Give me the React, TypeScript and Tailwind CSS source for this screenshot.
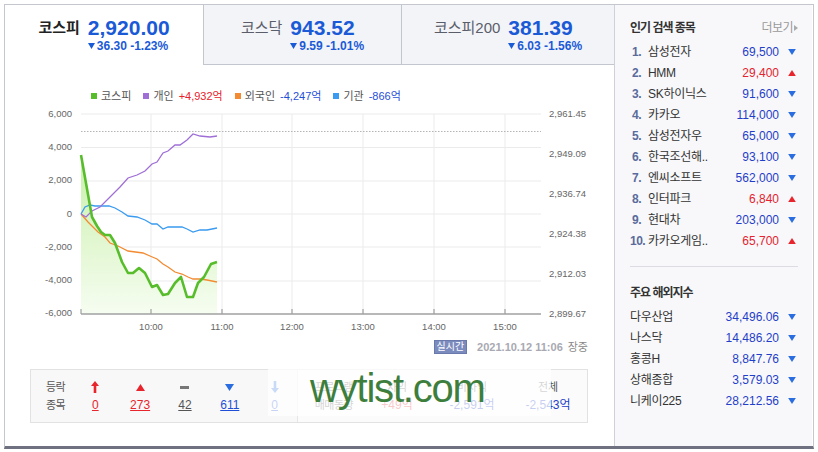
import React from 'react';

type Row = { rank?: number; name: string; price: string; up: boolean };

const popular: Row[] = [
  { rank: 1, name: '삼성전자', price: '69,500', up: false },
  { rank: 2, name: 'HMM', price: '29,400', up: true },
  { rank: 3, name: 'SK하이닉스', price: '91,600', up: false },
  { rank: 4, name: '카카오', price: '114,000', up: false },
  { rank: 5, name: '삼성전자우', price: '65,000', up: false },
  { rank: 6, name: '한국조선해..', price: '93,100', up: false },
  { rank: 7, name: '엔씨소프트', price: '562,000', up: false },
  { rank: 8, name: '인터파크', price: '6,840', up: true },
  { rank: 9, name: '현대차', price: '203,000', up: false },
  { rank: 10, name: '카카오게임..', price: '65,700', up: true },
];

const world: Row[] = [
  { name: '다우산업', price: '34,496.06', up: false },
  { name: '나스닥', price: '14,486.20', up: false },
  { name: '홍콩H', price: '8,847.76', up: false },
  { name: '상해종합', price: '3,579.03', up: false },
  { name: '니케이225', price: '28,212.56', up: false },
];

const Tri = ({ up, className = '' }: { up: boolean; className?: string }) => (
  <svg width="9" height="7" viewBox="0 0 9 7" className={className}>
    {up ? <polygon points="4.5,0 9,7 0,7" fill="#e8242c" /> : <polygon points="0,0 9,0 4.5,7" fill="#2a6de0" />}
  </svg>
);

const Tab = ({ label, value, change, active }: { label: string; value: string; change: string; active?: boolean }) => (
  <div
    className={
      active
        ? 'w-[198px] h-[60px] bg-white flex justify-center pt-[11px]'
        : 'h-[60px] bg-[#f3f4f7] border-l border-b border-[#c4c6ce] flex justify-center pt-[11px]'
    }
  >
    <span
      className={
        active
          ? 'text-[15px] leading-[24px] font-bold text-[#222] mr-[8px]'
          : 'text-[15px] leading-[24px] text-[#5a5e6a] mr-[8px]'
      }
    >
      {label}
    </span>
    <div>
      <div className="text-[21px] leading-[24px] font-bold text-[#1a5ad7]">{value}</div>
      <div className="flex items-center text-[12px] leading-[12px] font-bold text-[#1a5ad7]">
        <svg width="7" height="6" viewBox="0 0 7 6" className="mr-[2px]">
          <polygon points="0,0 7,0 3.5,6" fill="#1a5ad7" />
        </svg>
        {change}
      </div>
    </div>
  </div>
);

const green = '81,155 92,217 97,226 101,232 105,235 110,235 115,243 122,262 128,273 133,273 139,268 145,273 152,287 157,285 163,295 168,294 175,283 181,277 187,297 193,297 198,283 204,277 211,264 217,262';
const purple = '81,214 86,217 92,211 100,207 110,197 120,187 128,178 137,175 145,171 152,164 157,162 163,153 168,151 175,145 180,145 187,140 193,134 200,136 210,137 217,136';
const blue = '81,214 85,207 90,205 95,206 100,206 109,206 115,208 122,212 128,216 137,217 145,220 152,224 157,224 163,229 168,227 175,227 182,227 187,229 193,232 200,230 207,230 217,228';
const orange = '81,214 88,222 93,227 98,232 105,237 110,243 118,246 128,251 143,253 150,256 157,259 163,264 168,267 175,272 182,274 188,277 193,279 200,279 207,280 217,282';

const hLines = [114, 147.5, 181, 214, 247, 281];
const leftLabels = ['6,000', '4,000', '2,000', '0', '-2,000', '-4,000', '-6,000'];
const rightLabels = ['2,961.45', '2,949.09', '2,936.74', '2,924.38', '2,912.03', '2,899.67'];
const vLines = [151, 222, 292, 363, 434, 505];
const times = ['10:00', '11:00', '12:00', '13:00', '14:00', '15:00'];

const Chart = () => (
  <svg width="609" height="230" viewBox="5 105 609 230" className="block mt-[2px]">
    <defs>
      <linearGradient id="gfill" x1="0" y1="0" x2="0" y2="1">
        <stop offset="0" stopColor="#c9f0aa" />
        <stop offset="1" stopColor="#f6fdf1" />
      </linearGradient>
    </defs>
    {hLines.map((y) => (
      <line key={y} x1="81" x2="541" y1={y} y2={y} stroke="#ebebeb" strokeWidth="1" />
    ))}
    {vLines.map((x) => (
      <line key={x} x1={x} x2={x} y1="114" y2="314" stroke="#ebebeb" strokeWidth="1" />
    ))}
    <line x1="81" x2="541" y1="131.5" y2="131.5" stroke="#b4b4b4" strokeWidth="1" strokeDasharray="1.5,1.5" />
    <polygon points={`${green} 217,314 81,314`} fill="url(#gfill)" />
    <polyline points={orange} fill="none" stroke="#f28b32" strokeWidth="1.3" />
    <polyline points={blue} fill="none" stroke="#3a9bf0" strokeWidth="1.3" />
    <polyline points={purple} fill="none" stroke="#a06fd6" strokeWidth="1.3" />
    <polyline points={green} fill="none" stroke="#57bd2b" strokeWidth="2.6" strokeLinejoin="round" />
    <line x1="81" x2="541" y1="314" y2="314" stroke="#a0a0a0" strokeWidth="1.5" />
    {[81, ...vLines].map((x) => (
      <line key={x} x1={x} x2={x} y1="309" y2="314" stroke="#a0a0a0" strokeWidth="1.2" />
    ))}
    <g fontFamily="Liberation Sans, DejaVu Sans, sans-serif" fontSize="9.5" fill="#666">
      {leftLabels.map((t, i) => (
        <text key={t} x="72" y={114 + i * 33.33} textAnchor="end" dominantBaseline="middle">
          {t}
        </text>
      ))}
      {rightLabels.map((t, i) => (
        <text key={t} x="549" y={114 + i * 40} dominantBaseline="middle">
          {t}
        </text>
      ))}
      {times.map((t, i) => (
        <text key={t} x={vLines[i]} y="327" textAnchor="middle" dominantBaseline="middle">
          {t}
        </text>
      ))}
    </g>
  </svg>
);

const Legend = ({ color, label, value, valueColor }: { color: string; label: string; value?: string; valueColor?: string }) => (
  <div className="flex items-center mr-[12px]">
    <span className={`w-[6px] h-[6px] mr-[4px] ${color}`} />
    <span className="text-[#555]">{label}</span>
    {value && <span className={`ml-[5px] ${valueColor}`}>{value}</span>}
  </div>
);

const ListRow = ({ r }: { r: Row }) => (
  <div className="flex items-center h-[21px] text-[12px]">
    {r.rank !== undefined && (
      <span className={`w-[18px] font-bold text-[#5a6b9c] tracking-[-0.5px] ${r.rank < 10 ? 'pl-[2px]' : ''}`}>
        {r.rank}.
      </span>
    )}
    <span className="flex-1 text-[#333] tracking-[-0.3px] whitespace-nowrap">{r.name}</span>
    <span className={r.up ? 'text-[#e3232f]' : 'text-[#1f3ec9]'}>{r.price}</span>
    <span className="w-[19px] flex justify-end pr-[2px]">
      <Tri up={r.up} className="w-[8px] h-[6px]" />
    </span>
  </div>
);

const Cell = ({ children }: { children: React.ReactNode }) => (
  <div className="w-[45px] flex flex-col items-center">{children}</div>
);

export default function App() {
  return (
    <div className="w-[818px] h-[452px] bg-white pt-[4px] pl-[4px] font-['Liberation_Sans','Noto_Sans_CJK_KR',sans-serif]">
      <div className="w-[810px] h-[445px] border border-[#c5c7cf] border-b-[3px] border-b-[#6f7180] flex">
        {/* left: indices + chart */}
        <div className="w-[609px] flex flex-col">
          <div className="flex">
            <Tab label="코스피" value="2,920.00" change="36.30 -1.23%" active />
            <div className="w-[198px]">
              <Tab label="코스닥" value="943.52" change="9.59 -1.01%" />
            </div>
            <div className="w-[213px]">
              <Tab label="코스피200" value="381.39" change="6.03 -1.56%" />
            </div>
          </div>

          <div className="flex items-center mt-[24px] pl-[86px] h-[14px] text-[11px] leading-[14px]">
            <Legend color="bg-[#57bd2b]" label="코스피" />
            <Legend color="bg-[#a06fd6]" label="개인" value="+4,932억" valueColor="text-[#e8202a]" />
            <Legend color="bg-[#f28b32]" label="외국인" value="-4,247억" valueColor="text-[#1f4fd8]" />
            <Legend color="bg-[#3a9bf0]" label="기관" value="-866억" valueColor="text-[#1f4fd8]" />
          </div>

          <Chart />

          <div className="flex items-center justify-end pr-[26px] mt-[5px] h-[14px]">
            <span className="bg-[#7b8bbe] border border-[#6a79ac] text-white text-[10px] leading-[12px] px-[2px]">실시간</span>
            <span className="ml-[10px] text-[11px] font-bold text-[#a8a9b2]">2021.10.12 11:06</span>
            <span className="ml-[5px] text-[11px] text-[#888]">장중</span>
          </div>

          <div className="relative ml-[25px] mt-[15px] w-[558px] h-[54px] border border-[#e2e2e2] bg-[#f8f8f8] flex">
            <div className="flex pl-[15px] pt-[8px] w-[267px] border-r border-[#e6e6e6]">
              <div className="w-[27px] text-[11px] leading-[18px] text-[#555] tracking-[-0.5px]">
                <div>등락</div>
                <div>종목</div>
              </div>
              <Cell>
                <div className="h-[18px] flex items-center">
                  <svg width="8" height="12" viewBox="0 0 8 12">
                    <polygon points="4,0 8,5 5.3,5 5.3,12 2.7,12 2.7,5 0,5" fill="#e8242c" />
                  </svg>
                </div>
                <span className="text-[12px] leading-[18px] text-[#e8242c] underline">0</span>
              </Cell>
              <Cell>
                <div className="h-[18px] flex items-center">
                  <Tri up />
                </div>
                <span className="text-[12px] leading-[18px] text-[#e8242c] underline">273</span>
              </Cell>
              <Cell>
                <div className="h-[18px] flex items-center">
                  <span className="w-[9px] h-[3px] bg-[#777]" />
                </div>
                <span className="text-[12px] leading-[18px] text-[#555] underline">42</span>
              </Cell>
              <Cell>
                <div className="h-[18px] flex items-center">
                  <Tri up={false} />
                </div>
                <span className="text-[12px] leading-[18px] text-[#1f4fd8] underline">611</span>
              </Cell>
              <Cell>
                <div className="h-[18px] flex items-center">
                  <svg width="8" height="12" viewBox="0 0 8 12">
                    <polygon points="2.7,0 5.3,0 5.3,7 8,7 4,12 0,7 2.7,7" fill="#2a6de0" />
                  </svg>
                </div>
                <span className="text-[12px] leading-[18px] text-[#1f4fd8] underline">0</span>
              </Cell>
            </div>
            <div className="flex pt-[8px] text-[12px] leading-[18px] bg-[#fbfbfb] flex-1">
              <div className="w-[72px] flex flex-col items-center text-[11px] text-[#555] tracking-[-0.5px]">
                <div>프로그램</div>
                <div>매매동향</div>
              </div>
              <div className="w-[54px] flex flex-col items-center">
                <div className="text-[11px] text-[#555]">차익</div>
                <div className="text-[#e8242c]">+49억</div>
              </div>
              <div className="w-[96px] flex flex-col items-center">
                <div className="text-[11px] text-[#555]">비차익</div>
                <div className="text-[#1f3ec9]">-2,591억</div>
              </div>
              <div className="w-[56px] flex flex-col items-center">
                <div className="text-[11px] text-[#555]">전체</div>
                <div className="text-[#1f3ec9]">-2,543억</div>
              </div>
            </div>

            {/* watermark */}
            <div className="absolute left-[237px] top-[-1px] w-[283px] h-[47px] bg-white/75" />
            <div className="absolute left-[279px] top-[-2px] text-[40px] leading-[40px] tracking-[-1.2px] text-[#3d7e3d]">
              wytist.com
            </div>
          </div>
        </div>

        {/* right panel */}
        <div className="w-[198px] border-l border-[#cfd1d8] bg-[#f8f8fa] pl-[15px] pr-[14px] pt-[15px]">
          <div className="flex items-center justify-between h-[16px]">
            <span className="text-[12px] font-bold text-[#333] tracking-[-1px]">인기 검색 종목</span>
            <span className="flex items-center text-[12px] text-[#9a9a9a] tracking-[-0.5px]">
              더보기
              <svg width="4" height="6" viewBox="0 0 4 6" className="ml-[1px]">
                <polygon points="0,0 4,3 0,6" fill="#aaa" />
              </svg>
            </span>
          </div>
          <div className="mt-[5px]">
            {popular.map((r) => (
              <ListRow key={r.name} r={r} />
            ))}
          </div>
          <div className="mt-[15px] h-px bg-[#dcdde2]" />
          <div className="mt-[18px] h-[16px] flex items-center text-[12px] font-bold text-[#333] tracking-[-1px]">
            주요 해외지수
          </div>
          <div className="mt-[5px]">
            {world.map((r) => (
              <ListRow key={r.name} r={r} />
            ))}
          </div>
        </div>
      </div>
    </div>
  );
}
